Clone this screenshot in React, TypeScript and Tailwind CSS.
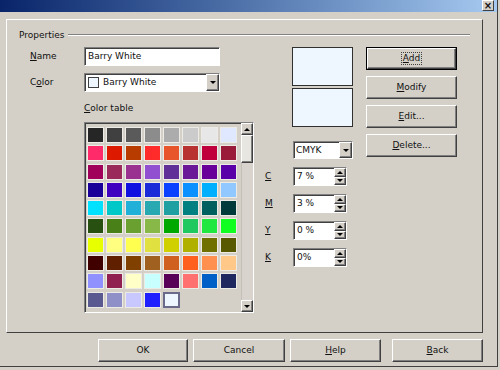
import React from 'react';

const raised =
  'border border-t-white border-l-white border-r-[#404040] border-b-[#404040] shadow-[inset_-1px_-1px_0_#808080]';
const sunken =
  'border border-t-[#808080] border-l-[#808080] border-r-white border-b-white shadow-[inset_1px_1px_0_#404040]';

// colour table, row by row
const palette = [
  ['bg-[#262626]', 'bg-[#404040]', 'bg-[#5a5a5a]', 'bg-[#8c8c8c]', 'bg-[#acacac]', 'bg-[#cbcbcb]', 'bg-[#e7e7e7]', 'bg-[#e0e8ff]'],
  ['bg-[#ff2a6a]', 'bg-[#dd1a00]', 'bg-[#b83c00]', 'bg-[#ff2a2a]', 'bg-[#e8552a]', 'bg-[#b83232]', 'bg-[#c0003c]', 'bg-[#9a1a3a]'],
  ['bg-[#a0005a]', 'bg-[#9a2a5a]', 'bg-[#9a3090]', 'bg-[#9050d0]', 'bg-[#603098]', 'bg-[#6a1898]', 'bg-[#6a009a]', 'bg-[#5a00a8]'],
  ['bg-[#1a0098]', 'bg-[#4000c0]', 'bg-[#1010e0]', 'bg-[#1a2ad8]', 'bg-[#0a40ff]', 'bg-[#0a90ff]', 'bg-[#00b0ff]', 'bg-[#90c8ff]'],
  ['bg-[#00e0ff]', 'bg-[#00c8c8]', 'bg-[#20b0d8]', 'bg-[#28a8b0]', 'bg-[#20a0a0]', 'bg-[#008080]', 'bg-[#006060]', 'bg-[#003a3a]'],
  ['bg-[#285010]', 'bg-[#4a8018]', 'bg-[#6aa030]', 'bg-[#88b848]', 'bg-[#00a800]', 'bg-[#20c860]', 'bg-[#20e840]', 'bg-[#10ff20]'],
  ['bg-[#e8ff00]', 'bg-[#ffff80]', 'bg-[#ffff50]', 'bg-[#e0e040]', 'bg-[#d0d000]', 'bg-[#b0b000]', 'bg-[#707000]', 'bg-[#585800]'],
  ['bg-[#400000]', 'bg-[#602000]', 'bg-[#804000]', 'bg-[#a06020]', 'bg-[#d06020]', 'bg-[#ff6020]', 'bg-[#ff9050]', 'bg-[#ffc888]'],
  ['bg-[#9090ff]', 'bg-[#902050]', 'bg-[#ffffc8]', 'bg-[#c8ffff]', 'bg-[#580058]', 'bg-[#ff7070]', 'bg-[#0060c8]', 'bg-[#202860]'],
  ['bg-[#5a5a90]', 'bg-[#9090c8]', 'bg-[#c8c8ff]', 'bg-[#2020ff]'],
];

const Up = () => <div className="w-0 h-0 border-x-[3px] border-x-transparent border-b-[3px] border-b-black" />;
const Down = () => <div className="w-0 h-0 border-x-[3px] border-x-transparent border-t-[3px] border-t-black" />;

function Btn({ k, rest, w, def }: { k: string; rest: string; w: string; def?: boolean }) {
  const inner = (
    <div className={`${raised} h-full w-full flex items-center justify-center`}>
      <span className={def ? 'outline outline-1 outline-dotted outline-[#404040] px-[1px]' : ''}>
        <span className="underline underline-offset-1">{k}</span>
        {rest}
      </span>
    </div>
  );
  return (
    <div className={`${w} h-[23px] ${def ? 'border border-black' : ''}`}>{inner}</div>
  );
}

function Spin({ label, value }: { label: string; value: string }) {
  return (
    <div className="flex items-center h-[19px] mt-[8px]">
      <div className="w-[31px] pl-[3px]">
        <span className="underline underline-offset-1">{label}</span>
      </div>
      <div className={`${sunken} bg-white w-[54px] h-[19px] flex items-center`}>
        <span className="pl-[3px] flex-1">{value}</span>
        <div className="w-[12px] h-full flex flex-col">
          <div className={`${raised} flex-1 flex items-center justify-center bg-[#d4d0c8]`}><Up /></div>
          <div className={`${raised} flex-1 flex items-center justify-center bg-[#d4d0c8]`}><Down /></div>
        </div>
      </div>
    </div>
  );
}

export default function App() {
  return (
    <div className="w-[500px] h-[370px] bg-[#d4d0c8] font-['DejaVu_Sans',sans-serif] text-[9px] leading-[11px] text-[#111] overflow-hidden">
      <div className="w-[498px] h-[367px] border-r border-b border-[#404040] flex flex-col">
        {/* title bar */}
        <div className="h-[12px] bg-linear-to-r from-[#0a246a] to-[#a6caf0] flex justify-end">
          <div className="w-[12px] h-[11px] mr-[3px] bg-[#d4d0c8] border border-t-white border-l-white border-r-[#404040] border-b-[#404040] flex items-center justify-center text-[10px] font-bold leading-none">
            ×
          </div>
        </div>

        <div className="flex-1 flex flex-col pl-[6px] pr-[14px]">
          {/* main panel */}
          <div className="mt-[7px] h-[314px] border border-t-white border-l-white border-r-[#404040] border-b-[#404040] flex flex-col">
            <div className="mt-[9px] h-[12px] flex items-center pl-[12px] pr-[12px]">
              <span>Properties</span>
              <div className="flex-1 ml-[4px] h-[2px] border-t border-t-[#808080] border-b border-b-white" />
            </div>

            <div className="mt-[6px] flex pl-[23px]">
              {/* left: name, color, colour table */}
              <div className="w-[224px] flex flex-col">
                <div className="flex items-center h-[19px]">
                  <div className="w-[54px]"><span className="underline underline-offset-1">N</span>ame</div>
                  <div className={`${sunken} bg-white w-[136px] h-[19px] flex items-center pl-[3px]`}>Barry White</div>
                </div>
                <div className="flex items-center h-[19px] mt-[7px]">
                  <div className="w-[54px]">C<span className="underline underline-offset-1">o</span>lor</div>
                  <div className={`${sunken} bg-white w-[136px] h-[19px] flex items-center`}>
                    <div className="w-[11px] h-[11px] ml-[3px] border border-[#404040] bg-[#eef6ff]" />
                    <span className="ml-[4px] flex-1">Barry White</span>
                    <div className={`${raised} w-[13px] h-full bg-[#d4d0c8] flex items-center justify-center`}><Down /></div>
                  </div>
                </div>
                <div className="ml-[54px] mt-[11px] h-[11px]">
                  <span className="underline underline-offset-1">C</span>olor table
                </div>
                <div className={`${sunken} ml-[54px] mt-[8px] w-[170px] h-[191px] flex`}>
                  <div className="pl-[2px] pt-[4px] grid grid-cols-[repeat(8,17px)] auto-rows-[16px] gap-x-[2px] gap-y-[2.3px] content-start">
                    {palette.flat().map((c, i) => (
                      <div key={i} className={`${c} border border-[#ecebe6]`} />
                    ))}
                    <div className="bg-[#eef6ff] border-2 border-[#6a6a8a]" />
                  </div>
                  <div className="ml-auto w-[12px] h-full flex flex-col">
                    <div className={`${raised} h-[12px] flex items-center justify-center`}><Up /></div>
                    <div className={`${raised} h-[28px] bg-[#e8e6e1]`} />
                    <div className="flex-1 bg-[#d8d4cd] border-l border-[#c4c0b8]" />
                    <div className={`${raised} h-[12px] flex items-center justify-center`}><Down /></div>
                  </div>
                </div>
              </div>

              {/* middle: previews and CMYK */}
              <div className="ml-[8px] w-[91px] flex flex-col">
                <div className="ml-[30px] w-[61px] h-[39px] border border-[#303030] bg-[#eef6ff]" />
                <div className="ml-[30px] mt-[2px] w-[61px] h-[39px] border border-[#303030] bg-[#eef6ff]" />
                <div className={`${sunken} ml-[31px] mt-[14px] w-[60px] h-[18px] bg-white flex items-center`}>
                  <span className="pl-[2px] flex-1">CMYK</span>
                  <div className={`${raised} w-[13px] h-full bg-[#d4d0c8] flex items-center justify-center`}><Down /></div>
                </div>
                <Spin label="C" value="7 %" />
                <Spin label="M" value="3 %" />
                <Spin label="Y" value="0 %" />
                <Spin label="K" value="0%" />
              </div>

              {/* right: actions */}
              <div className="ml-[13px] w-[91px] flex flex-col gap-[6px]">
                <Btn k="A" rest="dd" w="w-[91px]" def />
                <Btn k="M" rest="odify" w="w-[91px]" />
                <Btn k="E" rest="dit..." w="w-[91px]" />
                <Btn k="D" rest="elete..." w="w-[91px]" />
              </div>
            </div>
          </div>

          {/* footer */}
          <div className="mt-[6px] flex justify-end">
            <div className={`${raised} w-[90px] h-[23px] flex items-center justify-center`}>OK</div>
            <div className={`${raised} ml-[5px] w-[92px] h-[23px] flex items-center justify-center`}>Cancel</div>
            <div className="ml-[5px]"><Btn k="H" rest="elp" w="w-[91px]" /></div>
            <div className="ml-[11px]"><Btn k="B" rest="ack" w="w-[91px]" /></div>
          </div>
        </div>
      </div>
    </div>
  );
}
